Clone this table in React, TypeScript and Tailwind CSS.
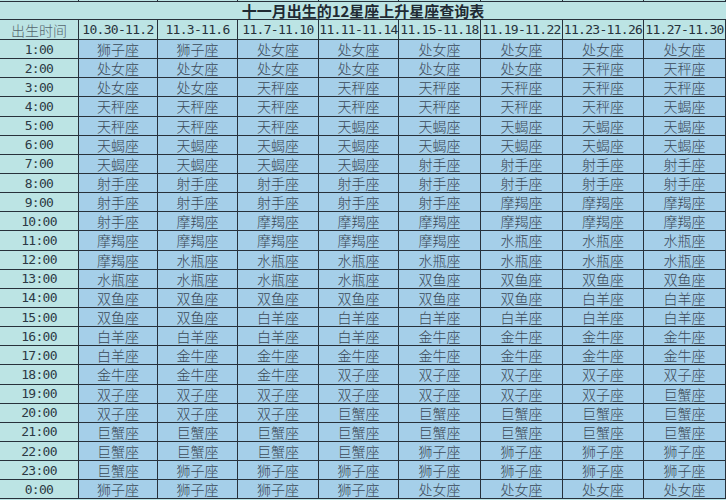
import React from "react";

const headers = [
  "10.30-11.2",
  "11.3-11.6",
  "11.7-11.10",
  "11.11-11.14",
  "11.15-11.18",
  "11.19-11.22",
  "11.23-11.26",
  "11.27-11.30",
];

const rows: [string, string[]][] = [
  ["1:00", ["狮子座", "狮子座", "处女座", "处女座", "处女座", "处女座", "处女座", "处女座"]],
  ["2:00", ["处女座", "处女座", "处女座", "处女座", "处女座", "处女座", "天秤座", "天秤座"]],
  ["3:00", ["处女座", "处女座", "天秤座", "天秤座", "天秤座", "天秤座", "天秤座", "天秤座"]],
  ["4:00", ["天秤座", "天秤座", "天秤座", "天秤座", "天秤座", "天秤座", "天秤座", "天蝎座"]],
  ["5:00", ["天秤座", "天秤座", "天秤座", "天蝎座", "天蝎座", "天蝎座", "天蝎座", "天蝎座"]],
  ["6:00", ["天蝎座", "天蝎座", "天蝎座", "天蝎座", "天蝎座", "天蝎座", "天蝎座", "天蝎座"]],
  ["7:00", ["天蝎座", "天蝎座", "天蝎座", "天蝎座", "射手座", "射手座", "射手座", "射手座"]],
  ["8:00", ["射手座", "射手座", "射手座", "射手座", "射手座", "射手座", "射手座", "射手座"]],
  ["9:00", ["射手座", "射手座", "射手座", "射手座", "射手座", "摩羯座", "摩羯座", "摩羯座"]],
  ["10:00", ["射手座", "摩羯座", "摩羯座", "摩羯座", "摩羯座", "摩羯座", "摩羯座", "摩羯座"]],
  ["11:00", ["摩羯座", "摩羯座", "摩羯座", "摩羯座", "摩羯座", "水瓶座", "水瓶座", "水瓶座"]],
  ["12:00", ["摩羯座", "水瓶座", "水瓶座", "水瓶座", "水瓶座", "水瓶座", "水瓶座", "水瓶座"]],
  ["13:00", ["水瓶座", "水瓶座", "水瓶座", "水瓶座", "双鱼座", "双鱼座", "双鱼座", "双鱼座"]],
  ["14:00", ["双鱼座", "双鱼座", "双鱼座", "双鱼座", "双鱼座", "双鱼座", "白羊座", "白羊座"]],
  ["15:00", ["双鱼座", "双鱼座", "白羊座", "白羊座", "白羊座", "白羊座", "白羊座", "白羊座"]],
  ["16:00", ["白羊座", "白羊座", "白羊座", "白羊座", "金牛座", "金牛座", "金牛座", "金牛座"]],
  ["17:00", ["白羊座", "金牛座", "金牛座", "金牛座", "金牛座", "金牛座", "金牛座", "金牛座"]],
  ["18:00", ["金牛座", "金牛座", "金牛座", "双子座", "双子座", "双子座", "双子座", "双子座"]],
  ["19:00", ["双子座", "双子座", "双子座", "双子座", "双子座", "双子座", "双子座", "巨蟹座"]],
  ["20:00", ["双子座", "双子座", "双子座", "巨蟹座", "巨蟹座", "巨蟹座", "巨蟹座", "巨蟹座"]],
  ["21:00", ["巨蟹座", "巨蟹座", "巨蟹座", "巨蟹座", "巨蟹座", "巨蟹座", "巨蟹座", "巨蟹座"]],
  ["22:00", ["巨蟹座", "巨蟹座", "巨蟹座", "巨蟹座", "狮子座", "狮子座", "狮子座", "狮子座"]],
  ["23:00", ["巨蟹座", "狮子座", "狮子座", "狮子座", "狮子座", "狮子座", "狮子座", "狮子座"]],
  ["0:00", ["狮子座", "狮子座", "狮子座", "狮子座", "处女座", "处女座", "处女座", "处女座"]],
];

const cjk = "font-['Noto_Sans_CJK_SC',sans-serif]";
const mono = "font-['DejaVu_Sans_Mono','Noto_Sans_CJK_SC',monospace]";

export default function App() {
  return (
    <div className="w-[726px] h-[500px] overflow-hidden bg-[#bce4e4]">
      <div className="grid grid-cols-[79px_79px_80px_81px_80px_82px_82px_81px_82px] grid-rows-[2px_18px_20px_repeat(24,19.15px)] text-[#36434f]">
        {/* top strip */}
        {Array.from({ length: 9 }).map((_, i) => (
          <div key={"t" + i} className="bg-[#bce4e4] border-r border-b border-[#27313b]" />
        ))}
        {/* title */}
        <div
          className={`col-span-9 bg-[#bce4e4] border-b border-[#27313b] flex items-center justify-center text-[15px] font-bold leading-none text-[#1f2a33] ${cjk}`}
        >
          十一月出生的12星座上升星座查询表
        </div>
        {/* header */}
        <div
          className={`bg-[#bce4e4] border-r border-b border-[#27313b] flex items-center justify-center text-[14px] leading-none text-[#56666f] font-light ${cjk}`}
        >
          出生时间
        </div>
        {headers.map((h) => (
          <div
            key={h}
            className={`bg-[#bce4e4] border-r border-b border-[#27313b] flex items-center justify-center whitespace-nowrap overflow-hidden text-[13px] leading-none tracking-[-0.7px] text-[#27323c] ${mono}`}
          >
            {h}
          </div>
        ))}
        {rows.map(([t, cells]) => (
          <React.Fragment key={t}>
            <div
              className={`bg-[#bce4e4] border-r border-b border-[#27313b] flex items-center justify-center text-[13px] leading-none tracking-[-0.7px] text-[#2c3944] ${mono}`}
            >
              {t}
            </div>
            {cells.map((c, j) => (
              <div
                key={j}
                className={`bg-[#a5cfe9] border-r border-b border-[#27313b] flex items-center justify-center text-[14px] leading-none font-light text-[#3a4856] ${cjk}`}
              >
                {c}
              </div>
            ))}
          </React.Fragment>
        ))}
      </div>
    </div>
  );
}
